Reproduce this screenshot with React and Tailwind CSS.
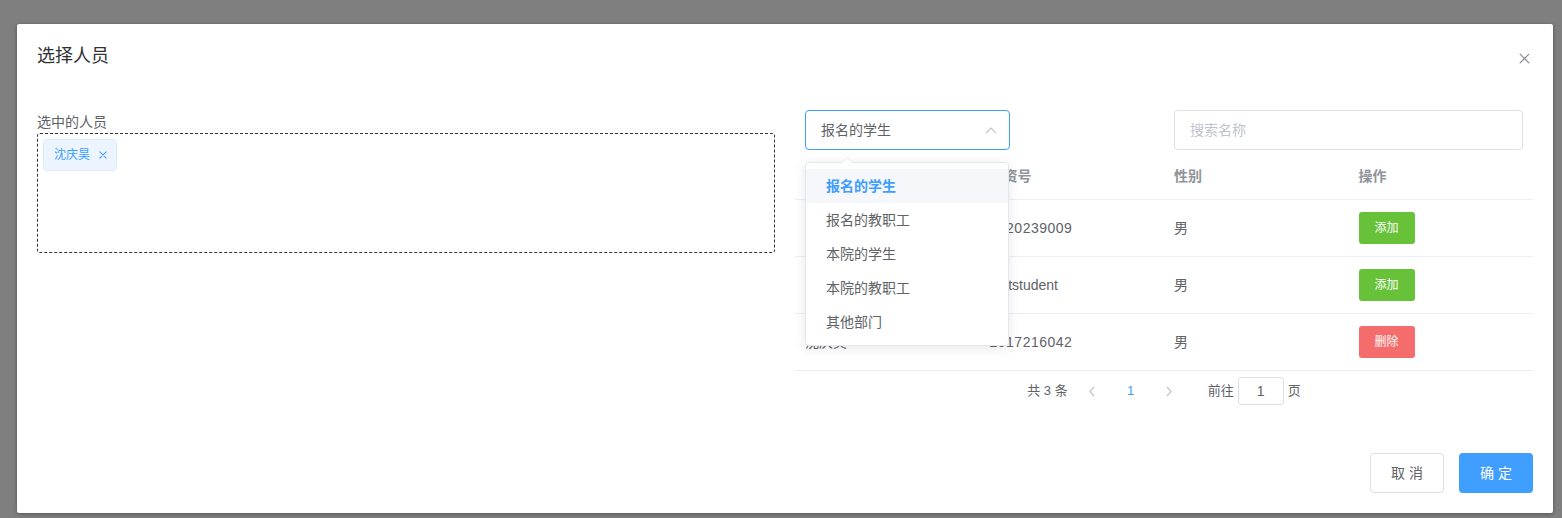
import React from "react";

const font = { fontFamily: '"Liberation Sans", "Noto Sans CJK SC", sans-serif' };

function XIcon({ size = 10, color = "#909399", sw = 1.2 }) {
  return (
    <svg width={size} height={size} viewBox="0 0 10 10">
      <path d="M1 1 L9 9 M9 1 L1 9" stroke={color} strokeWidth={sw} fill="none" strokeLinecap="round" />
    </svg>
  );
}

function Chevron({ dir = "left", color = "#c0c4cc" }) {
  const d = dir === "left" ? "M6 1 L2 5.5 L6 10" : "M2 1 L6 5.5 L2 10";
  return (
    <svg width="8" height="11" viewBox="0 0 8 11">
      <path d={d} stroke={color} strokeWidth="1.2" fill="none" />
    </svg>
  );
}

const rows = [
  { name: "张晓明", no: "2020239009", sex: "男", action: "add", digits: true },
  { name: "测试学生", no: "teststudent", sex: "男", action: "add", digits: false },
  { name: "沈庆昊", no: "2017216042", sex: "男", action: "del", digits: true },
];

const options = ["报名的学生", "报名的教职工", "本院的学生", "本院的教职工", "其他部门"];

export default function App() {
  return (
    <div className="min-h-[518px] w-[1562px] bg-[#7f7f7f] pt-[24px] overflow-hidden" style={font}>
      <div className="relative ml-[17px] w-[1536px] rounded-[2px] bg-white shadow-[0_1px_4px_rgba(0,0,0,0.35)]">
        {/* header */}
        <div className="px-[20px] pt-[20px] pb-[10px]">
          <div className="text-[18px] leading-[24px] text-[#303133]">选择人员</div>
        </div>
        <div className="absolute right-[23px] top-[29px]">
          <XIcon size={11} />
        </div>

        {/* body */}
        <div className="flex gap-[20px] px-[20px] pt-[30px] pb-[38px]">
          {/* left */}
          <div className="w-[738px] pt-[4px]">
            <div className="text-[14px] leading-[21px] text-[#606266]">选中的人员</div>
            <div className="h-[120px] border border-dashed border-[#333] rounded-[3px] p-[5px]">
              <div className="inline-flex h-[32px] items-center gap-[9px] rounded-[4px] border border-[#d9ecff] bg-[#ecf5ff] pl-[10px] pr-[9px] text-[12px] text-[#409eff]">
                <span>沈庆昊</span>
                <XIcon size={8} color="#409eff" sw={1.3} />
              </div>
            </div>
          </div>

          {/* right */}
          <div className="w-[738px]">
            <div className="mt-[2px] flex justify-between px-[10px]">
              <div className="relative w-[205px]">
                <div className="flex h-[40px] items-center justify-between rounded-[4px] border border-[#409eff] pl-[15px] pr-[12px] text-[14px] text-[#606266]">
                  <span>报名的学生</span>
                  <svg width="12" height="8" viewBox="0 0 12 8">
                    <path d="M1 7 L6 2 L11 7" stroke="#c0c4cc" strokeWidth="1.2" fill="none" />
                  </svg>
                </div>
                {/* dropdown */}
                <div className="absolute left-0 top-[52px] z-10 w-[204px] rounded-[4px] border border-[#e4e7ed] bg-white py-[6px] shadow-[0_2px_12px_rgba(0,0,0,0.1)]">
                  <div className="absolute -top-[6px] left-[35px] h-0 w-0 border-x-[6px] border-b-[6px] border-x-transparent border-b-[#e4e7ed]" />
                  <div className="absolute -top-[5px] left-[36px] h-0 w-0 border-x-[5px] border-b-[5px] border-x-transparent border-b-white" />
                  {options.map((o, i) => (
                    <div
                      key={o}
                      className={
                        i === 0
                          ? "flex h-[34px] items-center bg-[#f5f7fa] px-[20px] text-[14px] font-bold text-[#409eff]"
                          : "flex h-[34px] items-center px-[20px] text-[14px] text-[#606266]"
                      }
                    >
                      {o}
                    </div>
                  ))}
                </div>
              </div>
              <div className="flex h-[40px] w-[349px] items-center rounded-[4px] border border-[#dcdfe6] px-[15px] text-[14px] text-[#c0c4cc]">
                搜索名称
              </div>
            </div>

            {/* table */}
            <div className="mt-[2px]">
              <div className="grid h-[48px] grid-cols-4 items-center border-b border-[#ebeef5] pt-[1px] text-[14px] font-bold text-[#909399]">
                <div className="px-[10px]">姓名</div>
                <div className="px-[10px]">工资号</div>
                <div className="px-[10px]">性别</div>
                <div className="px-[10px]">操作</div>
              </div>
              {rows.map((r) => (
                <div key={r.no} className="grid h-[57px] grid-cols-4 items-center border-b border-[#ebeef5] text-[14px] text-[#606266]">
                  <div className="px-[10px]">{r.name}</div>
                  <div className={r.digits ? "px-[10px] tracking-[0.5px]" : "px-[10px]"}>{r.no}</div>
                  <div className="px-[10px]">{r.sex}</div>
                  <div className="px-[10px]">
                    {r.action === "add" ? (
                      <div className="flex h-[32px] w-[56px] items-center justify-center rounded-[3px] bg-[#67c23a] text-[12px] text-white">添加</div>
                    ) : (
                      <div className="flex h-[32px] w-[56px] items-center justify-center rounded-[3px] bg-[#f56c6c] text-[12px] text-white">删除</div>
                    )}
                  </div>
                </div>
              ))}
            </div>

            {/* pagination */}
            <div className="mt-[6px] flex h-[28px] items-center justify-center text-[13px] text-[#606266]">
              <span className="mr-[9px]">共 3 条</span>
              <span className="flex w-[30px] justify-center">
                <Chevron dir="left" />
              </span>
              <span className="ml-[5px] flex w-[38px] justify-center text-[#409eff]">1</span>
              <span className="ml-[4px] flex w-[30px] justify-center">
                <Chevron dir="right" />
              </span>
              <span className="ml-[24px]">前往</span>
              <span className="ml-[4px] flex h-[28px] w-[46px] items-center justify-center rounded-[3px] border border-[#dcdfe6] text-[14px]">1</span>
              <span className="ml-[4px]">页</span>
            </div>
          </div>
        </div>

        {/* footer */}
        <div className="flex justify-end gap-[15px] px-[20px] pt-[10px] pb-[20px]">
          <div className="flex h-[40px] w-[74px] items-center justify-center rounded-[4px] border border-[#dcdfe6] text-[14px] text-[#606266]">取 消</div>
          <div className="flex h-[40px] w-[74px] items-center justify-center rounded-[4px] bg-[#409eff] text-[14px] text-white">确 定</div>
        </div>
      </div>
    </div>
  );
}
